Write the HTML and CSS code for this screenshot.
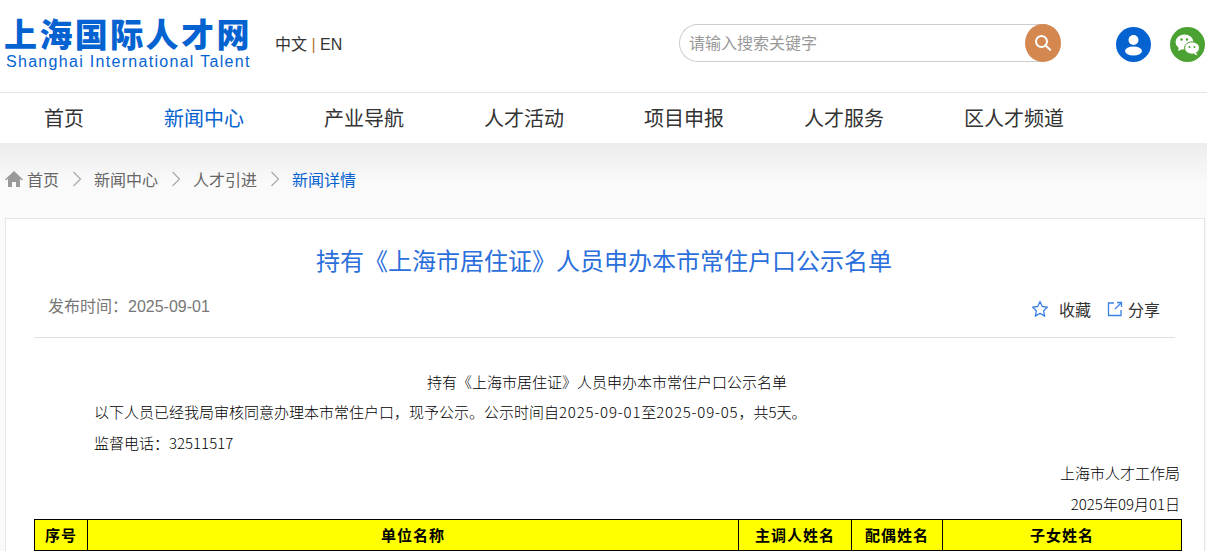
FILE: index.html
```html
<!DOCTYPE html>
<html lang="zh-CN">
<head>
    <meta charset="UTF-8">
    <meta name="viewport" content="width=device-width, initial-scale=1.0">
    <title>上海国际人才网</title>
    <link rel="stylesheet" href="styles.css">
</head>
<body>
    <header class="site-header">
        <a class="logo" href="#">
            <span class="logo-cn">上海国际人才网</span>
            <span class="logo-en">Shanghai International Talent</span>
        </a>
        <div class="lang">中文 <span class="lang-sep">|</span> EN</div>
        <div class="search">
            <span class="search-text">请输入搜索关键字</span>
            <span class="search-btn">
                <svg width="20" height="20" viewBox="0 0 20 20" fill="none" stroke="#fff" stroke-width="2" stroke-linecap="round"><circle cx="8.5" cy="8.5" r="5.5"/><path d="M12.8 12.8l4.4 4"/></svg>
            </span>
        </div>
        <span class="round-icon user-icon">
            <svg width="35" height="35" viewBox="0 0 35 35" fill="#fff"><circle cx="17.5" cy="13" r="5"/><ellipse cx="17.5" cy="24" rx="8.5" ry="4.5"/></svg>
        </span>
        <span class="round-icon wechat-icon">
            <svg width="35" height="35" viewBox="0 0 35 35"><ellipse cx="14.5" cy="15" rx="9" ry="7.5" fill="#fff"/><path d="M9 20l-1 4 5-2z" fill="#fff"/><ellipse cx="22" cy="21" rx="7.5" ry="6.2" fill="#fff" stroke="#4ba232"/><path d="M26 25.5l1.5 3-4-1.8z" fill="#fff"/><circle cx="11.5" cy="12.5" r="1.2" fill="#4ba232"/><circle cx="17" cy="12.5" r="1.2" fill="#4ba232"/><circle cx="19.5" cy="20" r="1" fill="#4ba232"/><circle cx="24.5" cy="20" r="1" fill="#4ba232"/></svg>
        </span>
    </header>

    <nav class="main-nav">
        <a href="#">首页</a>
        <a href="#" class="active">新闻中心</a>
        <a href="#">产业导航</a>
        <a href="#">人才活动</a>
        <a href="#">项目申报</a>
        <a href="#">人才服务</a>
        <a href="#">区人才频道</a>
    </nav>

    <main class="page">
        <div class="crumbs">
            <svg class="home" width="18" height="18" viewBox="0 0 18 18" fill="#999"><path d="M9 1L0 9.500l1 1L3 8.800V17h4v-5h4v5h4V8.800l2 1.700 1-1z"/></svg>
            <a href="#" class="crumb-home">首页</a>
            <svg class="arrow" width="10" height="18" viewBox="0 0 10 18" fill="none" stroke="#aaa" stroke-width="1.2"><path d="M1.500 2l7 7-7 7"/></svg>
            <a href="#">新闻中心</a>
            <svg class="arrow" width="10" height="18" viewBox="0 0 10 18" fill="none" stroke="#aaa" stroke-width="1.2"><path d="M1.500 2l7 7-7 7"/></svg>
            <a href="#">人才引进</a>
            <svg class="arrow" width="10" height="18" viewBox="0 0 10 18" fill="none" stroke="#aaa" stroke-width="1.2"><path d="M1.500 2l7 7-7 7"/></svg>
            <a href="#" class="current">新闻详情</a>
        </div>

        <article class="card">
            <h1 class="title">持有《上海市居住证》人员申办本市常住户口公示名单</h1>
            <div class="meta">
                <span class="date">发布时间：2025-09-01</span>
                <div class="actions">
                    <svg width="18" height="18" viewBox="0 0 18 18" fill="none" stroke="#3b82e6" stroke-width="1.3" stroke-linejoin="round"><path d="M9 1.500l2.300 5 5.200.6-3.900 3.600 1.100 5.400L9 13.400l-4.700 2.700 1.100-5.400-3.900-3.600 5.200-.6z"/></svg>
                    <span class="act-label">收藏</span>
                    <svg class="share" width="16" height="16" viewBox="0 0 16 16" fill="none" stroke="#3b82e6" stroke-width="1.3"><path d="M7 2H1.500v12.500h12.500V9M8 8l6-6M10 1.500h4.500V6"/></svg>
                    <span class="act-label act-share">分享</span>
                </div>
            </div>
            <div class="content">
                <p class="center">持有《上海市居住证》人员申办本市常住户口公示名单</p>
                <p class="indent">以下人员已经我局审核同意办理本市常住户口，现予公示。公示时间自<span class="day">2025-09-01</span>至<span class="day">2025-09-05</span>，共5天。</p>
                <p class="indent">监督电话：32511517</p>
                <p class="right">上海市人才工作局</p>
                <p class="right">2025年09月01日</p>
                <table class="list">
                    <tr>
                        <th class="c-no">序号</th>
                        <th>单位名称</th>
                        <th class="c-main">主调人姓名</th>
                        <th class="c-spouse">配偶姓名</th>
                        <th class="c-child">子女姓名</th>
                    </tr>
                </table>
            </div>
        </article>
    </main>
</body>
</html>
```

FILE: styles.css
```css
* {
    box-sizing: border-box;
}
html, body {
    height: 551px;
    overflow: hidden;
}
body {
    margin: 0;
    font-family: "Liberation Sans", "Noto Sans CJK SC", sans-serif;
    color: #333;
    background-color: #fff;
}
a {
    color: inherit;
    text-decoration: none;
}
.site-header {
    display: flex;
    align-items: flex-start;
    height: 93px;
    padding: 0 2px 0 5px;
    border-bottom: 1px solid #e5e5e5;
}
.logo {
    display: flex;
    flex-direction: column;
    width: 246px;
    margin-top: 14px;
    color: #0563d1;
}
.logo-cn {
    margin-left: -1px;
    font-family: "Noto Sans CJK SC", sans-serif;
    font-size: 33px;
    font-weight: 900;
    line-height: 38px;
    letter-spacing: 2.400px;
    white-space: nowrap;
}
.logo-en {
    margin-left: 1px;
    font-size: 16px;
    line-height: 20px;
    letter-spacing: 1.300px;
    white-space: nowrap;
}
.lang {
    margin: 35px 0 0 24px;
    font-size: 16px;
    line-height: 20px;
    white-space: nowrap;
}
.lang-sep {
    color: #b5762f;
}
.search {
    display: flex;
    align-items: center;
    justify-content: space-between;
    width: 382px;
    height: 38px;
    margin: 24px 0 0 auto;
    padding-left: 9px;
    border: 1px solid #ccc;
    border-right: none;
    border-radius: 19px;
}
.search-text {
    padding-bottom: 3px;
    font-size: 16px;
    color: #999;
}
.search-btn {
    display: flex;
    align-items: center;
    justify-content: center;
    width: 36px;
    height: 38px;
    margin: -1px 0;
    border-radius: 50%;
    background-color: #d4874f;
}
.round-icon {
    width: 35px;
    height: 35px;
    margin-top: 27px;
    border-radius: 50%;
}
.round-icon svg {
    display: block;
}
.user-icon {
    margin-left: 55px;
    background-color: #0563d1;
}
.wechat-icon {
    margin-left: 19px;
    background-color: #4ba232;
}
.main-nav {
    display: flex;
    height: 50px;
    padding-left: 4px;
    background-color: #fff;
}
.main-nav a {
    padding: 0 40px;
    font-size: 20px;
    line-height: 52px;
    white-space: nowrap;
}
.main-nav a.active {
    color: #0563d1;
}
.page {
    padding: 0 2px 0 5px;
    background: linear-gradient(#ececec, #fafafa 40px);
}
.crumbs {
    display: flex;
    align-items: center;
    height: 75px;
    padding-bottom: 4px;
    font-size: 16px;
    color: #666;
}
.crumbs .home {
    margin-right: 4px;
}
.crumbs .arrow {
    margin: 0 12px 0 13px;
}
.crumbs .current {
    color: #0563d1;
}
.card {
    height: 400px;
    padding: 0 24px 0 28px;
    border: 1px solid #e5e5e5;
    background-color: #fff;
}
.title {
    margin: 0;
    padding: 25px 6px 0 0;
    font-size: 24px;
    font-weight: normal;
    line-height: 36px;
    text-align: center;
    color: #2a6fdb;
}
.meta {
    display: flex;
    justify-content: space-between;
    height: 58px;
    margin-right: 5px;
    padding: 15px 15px 0 14px;
    border-bottom: 1px solid #e0e0e0;
    font-size: 16px;
}
.date {
    color: #777;
    line-height: 24px;
}
.actions {
    display: flex;
    align-items: center;
    height: 24px;
    margin-top: 2px;
}
.act-label {
    margin-left: 10px;
}
.act-share {
    margin-left: 5px;
}
.share {
    margin-left: 16px;
}
.content {
    padding-top: 29px;
    font-family: "Noto Sans CJK SC", sans-serif;
    font-size: 15px;
    font-weight: 300;
    color: #000;
}
.content p {
    margin: 0;
    height: 30.400px;
    line-height: 30px;
}
.day {
    letter-spacing: 0.800px;
}
.center {
    text-align: center;
}
.indent {
    padding-left: 60px;
}
.content .right {
    text-align: right;
}
.list {
    width: 1148px;
    height: 32px;
    border-collapse: collapse;
    table-layout: fixed;
}
.list th {
    padding: 0;
    border: 1px solid #000;
    background-color: #ff0;
    font-size: 15px;
    font-weight: 700;
    letter-spacing: 1px;
}
.c-no {
    width: 53px;
}
.c-main {
    width: 113px;
}
.c-spouse {
    width: 91px;
}
.c-child {
    width: 239px;
}
```
